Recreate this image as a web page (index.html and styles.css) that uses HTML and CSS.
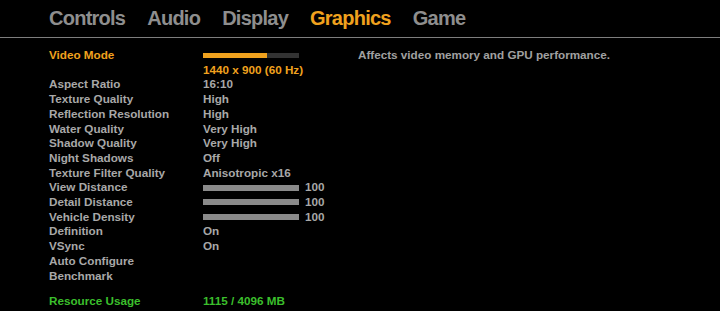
FILE: index.html
```html
<!DOCTYPE html>
<html lang="en">
<head>
    <meta charset="UTF-8">
    <title>Graphics Settings</title>
    <link rel="stylesheet" href="styles.css">
</head>
<body>
    <div class="tabs">
        <span class="tab">Controls</span>
        <span class="tab">Audio</span>
        <span class="tab">Display</span>
        <span class="tab active">Graphics</span>
        <span class="tab">Game</span>
    </div>
    <div class="panel">
        <div class="settings">
            <div class="row selected">
                <span class="label">Video Mode</span>
                <div class="value">
                    <div class="slot"><div class="meter"><div class="meter-fill" style="width: 67%"></div></div></div>
                    <div>1440 x 900 (60 Hz)</div>
                </div>
            </div>
            <div class="row"><span class="label">Aspect Ratio</span><span class="value">16:10</span></div>
            <div class="row"><span class="label">Texture Quality</span><span class="value">High</span></div>
            <div class="row"><span class="label">Reflection Resolution</span><span class="value">High</span></div>
            <div class="row"><span class="label">Water Quality</span><span class="value">Very High</span></div>
            <div class="row"><span class="label">Shadow Quality</span><span class="value">Very High</span></div>
            <div class="row"><span class="label">Night Shadows</span><span class="value">Off</span></div>
            <div class="row"><span class="label">Texture Filter Quality</span><span class="value">Anisotropic x16</span></div>
            <div class="row">
                <span class="label">View Distance</span>
                <div class="value slot"><div class="slider"></div><span class="amount">100</span></div>
            </div>
            <div class="row">
                <span class="label">Detail Distance</span>
                <div class="value slot"><div class="slider"></div><span class="amount">100</span></div>
            </div>
            <div class="row">
                <span class="label">Vehicle Density</span>
                <div class="value slot"><div class="slider"></div><span class="amount">100</span></div>
            </div>
            <div class="row"><span class="label">Definition</span><span class="value">On</span></div>
            <div class="row"><span class="label">VSync</span><span class="value">On</span></div>
            <div class="row"><span class="label">Auto Configure</span></div>
            <div class="row"><span class="label">Benchmark</span></div>
            <div class="row usage"><span class="label">Resource Usage</span><span class="value">1115 / 4096 MB</span></div>
        </div>
        <p class="desc">Affects video memory and GPU performance.</p>
    </div>
</body>
</html>
```

FILE: styles.css
```css
body {
    margin: 0;
    background-color: #000;
    font-family: 'Liberation Sans', Arial, sans-serif;
    font-weight: bold;
    color: #a8a8a8;
}
.tabs {
    display: flex;
    gap: 22px;
    height: 38px;
    padding-left: 49px;
    border-bottom: 1px solid #7e7e7e;
    box-sizing: border-box;
}
.tab {
    font-size: 20px;
    letter-spacing: -0.75px;
    line-height: 20px;
    padding-top: 8px;
    color: #8e8e8e;
}
.tab.active {
    color: #f0a21e;
}
.panel {
    display: flex;
    padding: 10px 0 0 49px;
}
.settings {
    width: 309px;
    font-size: 11.7px;
    line-height: 14.7px;
}
.row {
    display: grid;
    grid-template-columns: 154px 1fr;
}
.selected {
    color: #f0a21e;
}
.slot {
    display: flex;
    align-items: center;
    height: 14.7px;
}
.meter {
    width: 96px;
    height: 5px;
    background-color: #333;
}
.meter-fill {
    height: 100%;
    background-color: #f0a21e;
}
.slider {
    width: 96px;
    height: 6px;
    background-color: #8a8a8a;
}
.amount {
    margin-left: 6px;
}
.usage {
    margin-top: 11px;
    color: #3bbf2c;
}
.desc {
    margin: 0;
    font-size: 11.7px;
    line-height: 14.7px;
    color: #a0a0a0;
}
```
